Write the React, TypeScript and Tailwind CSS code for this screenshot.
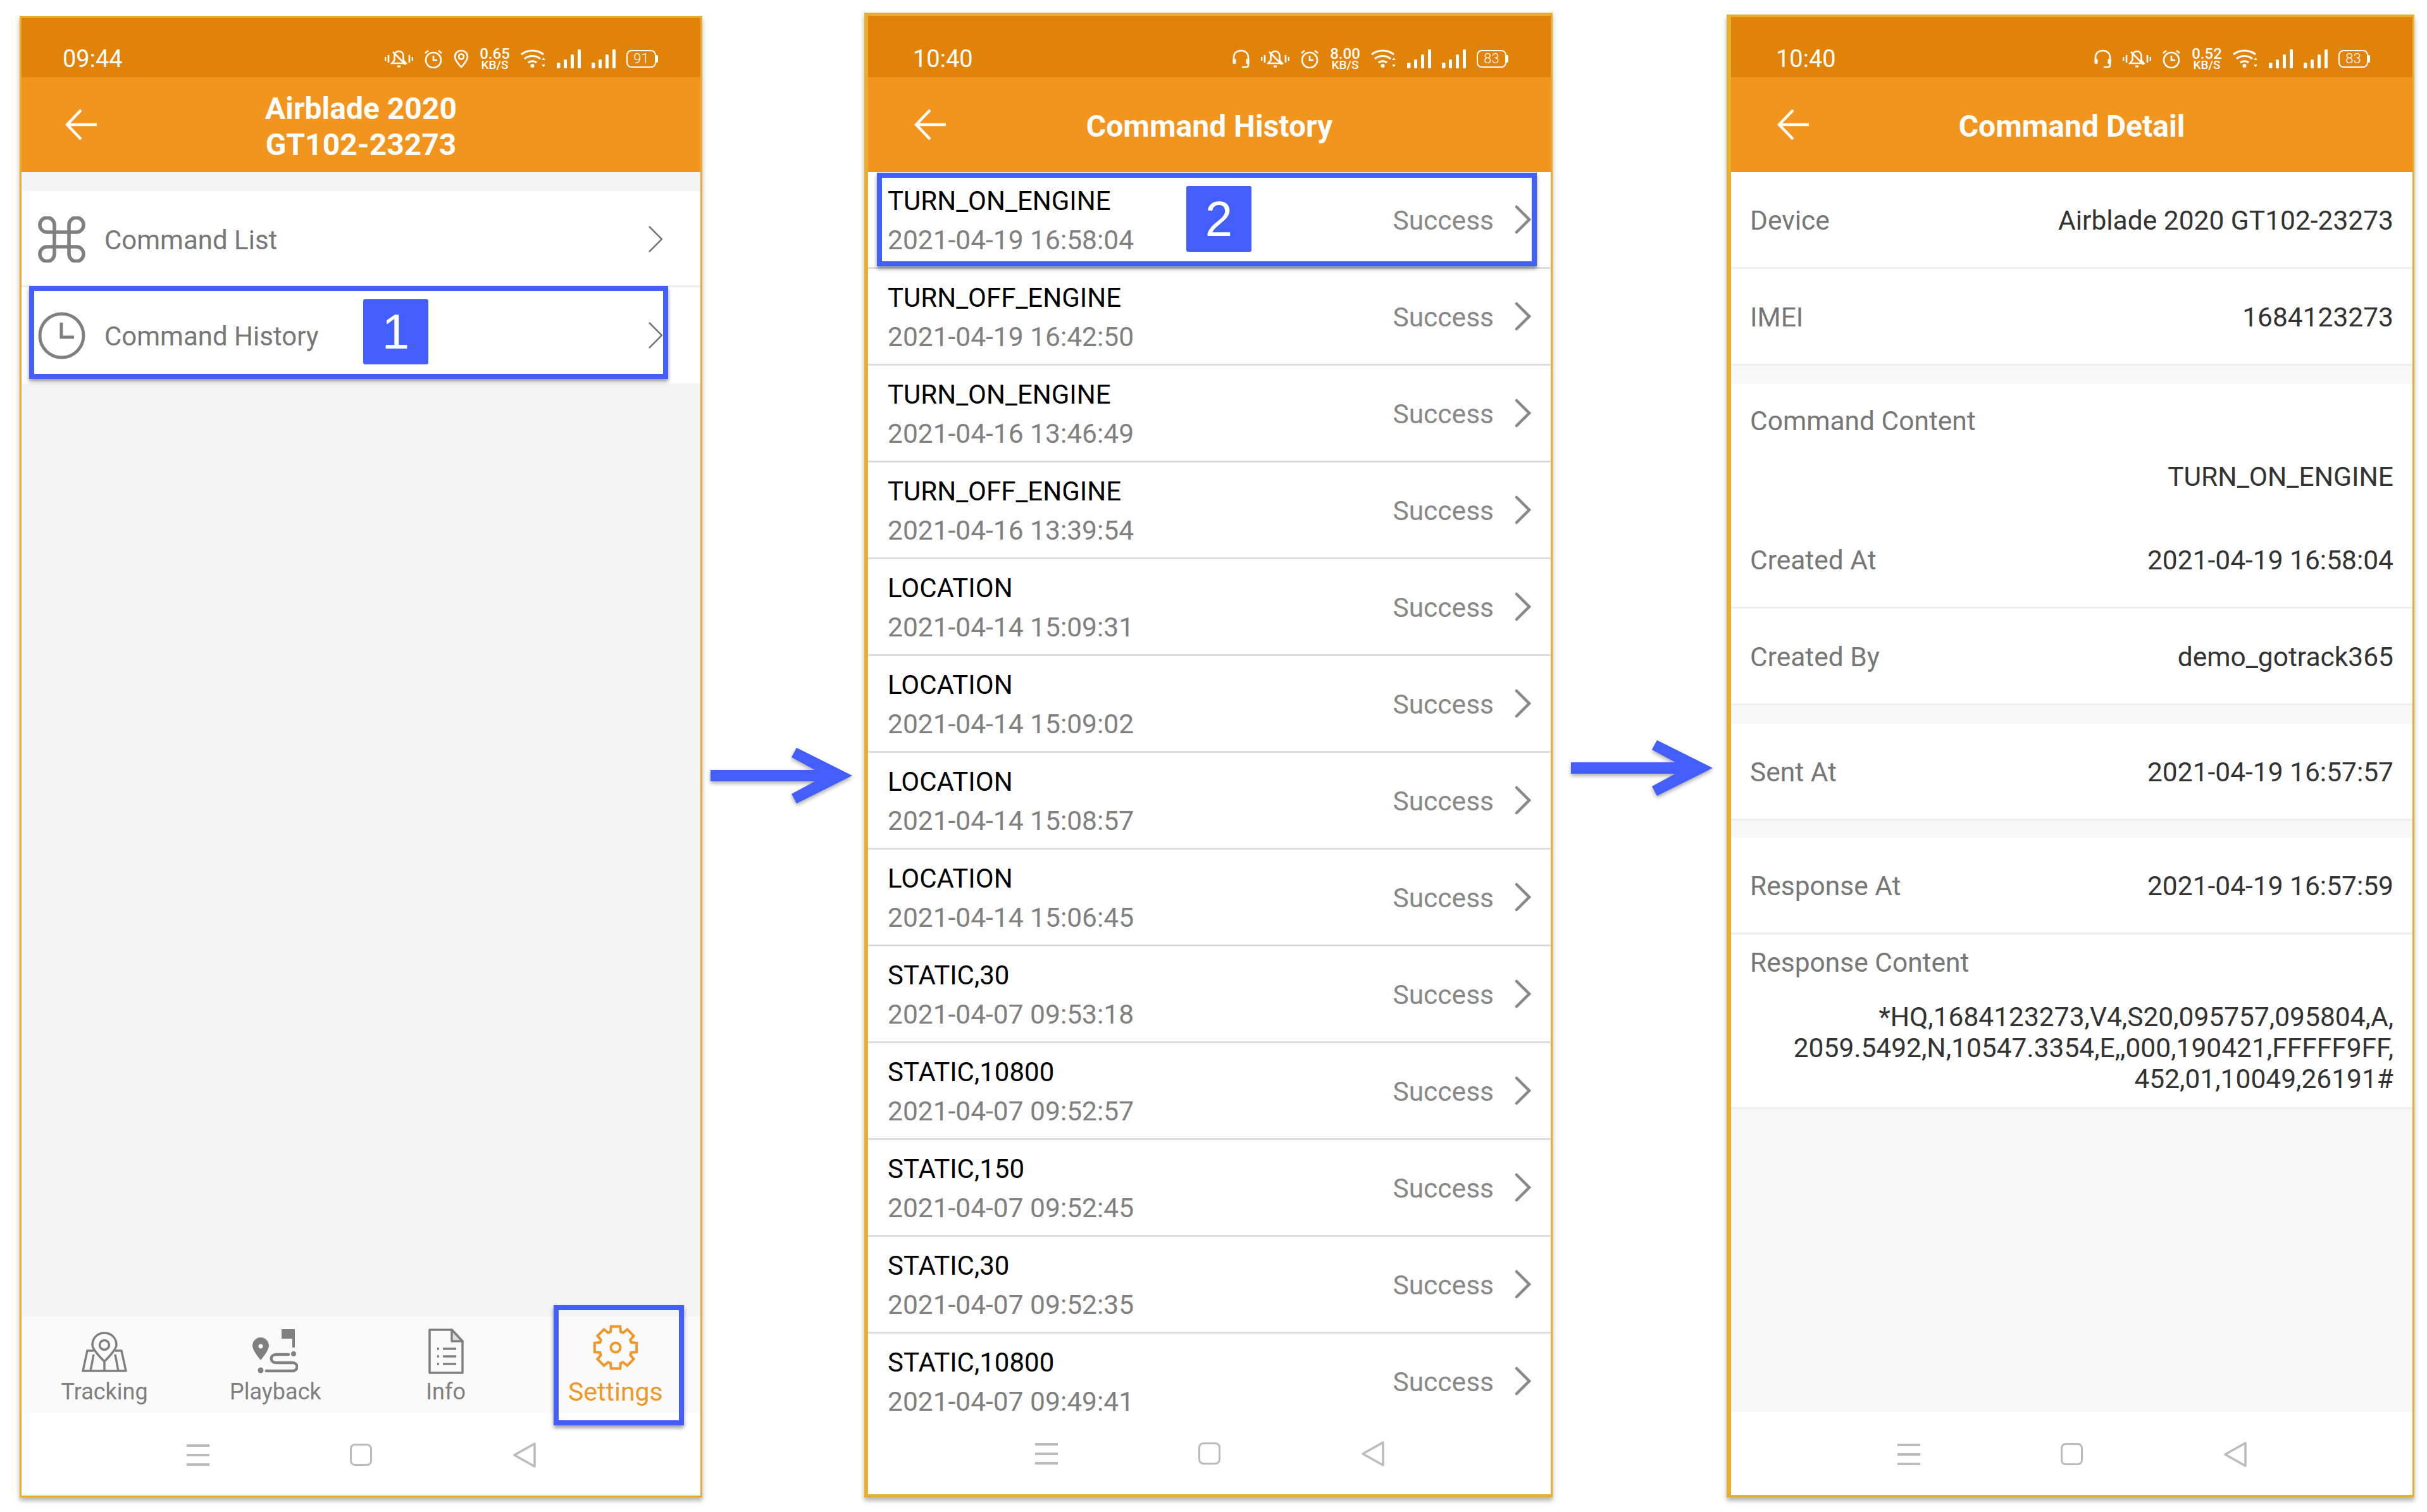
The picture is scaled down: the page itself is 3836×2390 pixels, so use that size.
import React from 'react';

// generates the outline of the settings cog
function gearPath(cx: number, cy: number, ro: number, ri: number, teeth: number) {
    const pts: string[] = [];
    const step = (Math.PI * 2) / teeth;
    for (let i = 0; i < teeth; i++) {
        const a = i * step - Math.PI / 2;
        const offs: [number, number][] = [
            [-0.4, ri],
            [-0.27, ro],
            [0.27, ro],
            [0.4, ri],
        ];
        offs.forEach(([o, r]) => {
            const t = a + o * step;
            pts.push(`${(cx + r * Math.cos(t)).toFixed(1)} ${(cy + r * Math.sin(t)).toFixed(1)}`);
        });
    }
    return 'M' + pts.join('L') + 'Z';
}

const BellOff = () => (
    <svg viewBox="0 0 45 30" className="w-[45px] h-[30px]" fill="none" stroke="#fff" strokeWidth="2.6">
        <path d="M1 12v6M6 9v12M39 9v12M44 12v6" />
        <path d="M22.5 3c-5 0-7 4-7 8v6l-4 5h22l-4-5v-6c0-4-2-8-7-8z" />
        <path d="M20 27h5" strokeWidth="3" />
        <path d="M13 4l20 20" />
    </svg>
);

const Alarm = () => (
    <svg viewBox="0 0 30 30" className="w-[30px] h-[30px]" fill="none" stroke="#fff" strokeWidth="2.6">
        <circle cx="15" cy="17" r="12" />
        <path d="M15 10v7h6M2 6l5-4M28 6l-5-4" />
    </svg>
);

const Pin = () => (
    <svg viewBox="0 0 24 30" className="w-[24px] h-[30px]" fill="none" stroke="#fff" strokeWidth="2.6">
        <path d="M12 28S2 18 2 11.5C2 6 6.500 2 12 2s10 4 10 9.500C22 18 12 28 12 28z" />
        <circle cx="12" cy="11.500" r="4" />
    </svg>
);

const Headset = () => (
    <svg viewBox="0 0 29 30" className="w-[29px] h-[30px]" fill="none" stroke="#fff" strokeWidth="2.6">
        <path d="M3 17v-4C3 6 8 2 14.500 2S26 6 26 13v12c0 2-1 3-3 3h-7" />
        <rect x="1.500" y="15" width="5" height="8" rx="1.500" fill="#fff" stroke="none" />
        <rect x="22.500" y="15" width="5" height="8" rx="1.500" fill="#fff" stroke="none" />
    </svg>
);

const Wifi = () => (
    <svg viewBox="0 0 40 30" className="w-[40px] h-[30px]" fill="none" stroke="#fff" strokeWidth="3.200">
        <path d="M1 8C11 0 26 0 36 8M6 15c7-6 18-6 25 0M12 21c3-3 10-3 13 0" />
        <circle cx="18.500" cy="26" r="3" fill="#fff" stroke="none" />
        <path d="M36 13l-3 4h6zM36 28l-3-4h6z" fill="#fff" stroke="none" />
    </svg>
);

const Signal = () => (
    <svg viewBox="0 0 38 30" className="w-[38px] h-[30px]" fill="#fff">
        <rect x="0" y="21" width="5.500" height="9" rx="1.500" />
        <rect x="11" y="16" width="5" height="14" rx="1.500" />
        <rect x="22" y="8" width="5" height="22" rx="1.500" />
        <rect x="33" y="0" width="5" height="30" rx="1.500" />
    </svg>
);

const Battery = ({ level }: { level: string }) => (
    <div className="flex items-center">
        <div className="w-[47px] h-[28px] rounded-[8px] border-[2.5px] border-white flex items-center justify-center text-white text-[22px] font-light leading-none">
            {level}
        </div>
        <div className="w-[3px] h-[12px] bg-white rounded-r-[2px]" />
    </div>
);

const BackArrow = () => (
    <svg viewBox="0 0 50 50" className="w-[50px] h-[50px]" fill="none" stroke="#fff" strokeWidth="4.500">
        <path d="M50 25H3M25 2L3 25l22 23" />
    </svg>
);

const StatusBar = ({ time, speed, battery, headset, pin, leftPad }: { time: string; speed: string; battery: string; headset?: boolean; pin?: boolean; leftPad: string }) => (
    <div className="flex flex-col justify-end bg-[#E08308] shrink-0 h-full">
        <div className={`flex items-center justify-between h-[58px] pr-[67px] ${leftPad}`}>
            <span className="text-white text-[38px] leading-none">{time}</span>
            <div className="flex items-center gap-[17px]">
                {headset && <Headset />}
                <BellOff />
                <Alarm />
                {pin && <Pin />}
                <div className="flex flex-col items-center text-white font-medium leading-none w-[48px]">
                    <span className="text-[24px] leading-[20px]">{speed}</span>
                    <span className="text-[19px] leading-[16px]">KB/S</span>
                </div>
                <Wifi />
                <Signal />
                <Signal />
                <Battery level={battery} />
            </div>
        </div>
    </div>
);

const Header = ({ lines, arrowLeft }: { lines: string[]; arrowLeft: string }) => (
    <div className="relative flex items-center justify-center h-[150px] bg-[#F2951F] shrink-0">
        <div className={`absolute top-[50px] ${arrowLeft}`}>
            <BackArrow />
        </div>
        <div className="text-white text-[48px] font-bold leading-[57px] text-center pt-[5px]">
            {lines.map((l) => (
                <div key={l}>{l}</div>
            ))}
        </div>
    </div>
);

const NavBar = () => (
    <div className="grid grid-cols-[258px_258px_258px] justify-center items-center h-[131px] bg-white shrink-0 justify-items-center pt-[2px]">
        <div className="w-[36px] h-[34px] flex flex-col justify-between">
            <div className="h-[4px] bg-[#BBBBBB]" />
            <div className="h-[4px] bg-[#BBBBBB]" />
            <div className="h-[4px] bg-[#BBBBBB]" />
        </div>
        <div className="w-[35px] h-[35px] rounded-[8px] border-[3px] border-[#BBBBBB]" />
        <svg viewBox="0 0 36 40" className="w-[36px] h-[40px]" fill="none" stroke="#BBBBBB" strokeWidth="3.500" strokeLinejoin="round">
            <path d="M34 2v36L2 20z" />
        </svg>
    </div>
);

const Chevron = () => (
    <svg viewBox="0 0 26 46" className="w-[26px] h-[46px] shrink-0" fill="none" stroke="#888888" strokeWidth="4.500" strokeLinecap="round">
        <path d="M3 3l20 20-20 20" />
    </svg>
);

const ThinChevron = () => (
    <svg viewBox="0 0 22 42" className="w-[22px] h-[42px] shrink-0" fill="none" stroke="#777777" strokeWidth="2.500">
        <path d="M1 1l20 20L1 41" />
    </svg>
);

const CommandIcon = () => (
    <svg viewBox="2.500 2.500 19 19" className="w-[75px] h-[73px] shrink-0" fill="none" stroke="#808080" strokeWidth="1.450">
        <path d="M15 6v12a3 3 0 1 0 3-3H6a3 3 0 1 0 3 3V6a3 3 0 1 0-3 3h12a3 3 0 1 0-3-3" />
    </svg>
);

const ClockIcon = () => (
    <svg viewBox="0 0 75 75" className="w-[75px] h-[75px] shrink-0" fill="none" stroke="#808080" strokeWidth="5">
        <circle cx="37.500" cy="37.500" r="34.500" />
        <path d="M37 17v23h20" />
    </svg>
);

const TrackingIcon = () => (
    <svg viewBox="0 0 72 64" className="w-[72px] h-[64px]" fill="none" stroke="#808080" strokeWidth="3.500" strokeLinejoin="round">
        <path d="M36 2C25 2 17 10 17 21c0 8 19 26 19 26s19-18 19-26C55 10 47 2 36 2z" />
        <circle cx="36" cy="21" r="7.500" />
        <path d="M19 30H9L2 62h68l-7-32H53M19 36l-5 26M53 36l5 26M36 47v15" />
    </svg>
);

const PlaybackIcon = () => (
    <svg viewBox="0 0 72 70" className="w-[72px] h-[70px]" fill="none" stroke="#808080" strokeWidth="4.500" strokeLinecap="round">
        <path d="M46 0h21v15H46z" fill="#808080" stroke="none" />
        <path d="M63 15h4v14h-4z" fill="#808080" stroke="none" />
        <path d="M13 13C6 13 0 19 0 26c0 8 13 23 13 23s13-15 13-23c0-7-6-13-13-13z" fill="#808080" stroke="none" />
        <circle cx="13" cy="27" r="3.500" fill="#FAFAFA" stroke="none" />
        <path d="M57 40H38c-11 0-11 13 0 13h25c10 0 10 13 0 13H22" />
        <circle cx="65" cy="39" r="4" fill="#808080" stroke="none" />
        <circle cx="13" cy="65" r="4.500" fill="#808080" stroke="none" />
    </svg>
);

const InfoIcon = () => (
    <svg viewBox="0 0 56 72" className="w-[56px] h-[72px]" fill="none" stroke="#808080" strokeWidth="3.500" strokeLinejoin="round">
        <path d="M2 2h35l17 18v50H2z" />
        <path d="M37 2v18h17z" fill="#DDDDDD" />
        <path d="M14 32h3M23 32h21M14 44h3M23 44h21M14 56h3M23 56h21" strokeWidth="3.500" />
    </svg>
);

const GearIcon = () => (
    <svg viewBox="0 0 72 72" className="w-[72px] h-[72px]" fill="none" stroke="#EF982A" strokeWidth="4">
        <path d={gearPath(36, 36, 34, 26, 8)} />
        <circle cx="36" cy="36" r="7.500" />
    </svg>
);

const TabBar = () => (
    <div className="grid grid-cols-4 h-[152px] bg-[#FAFAFA] shrink-0">
        <div className="flex flex-col items-center pr-[6px]">
            <div className="h-[94px] pt-[24px]"><TrackingIcon /></div>
            <span className="text-[36px] leading-[50px] text-[#808080]">Tracking</span>
        </div>
        <div className="flex flex-col items-center pr-[2px]">
            <div className="h-[94px] pt-[20px]"><PlaybackIcon /></div>
            <span className="text-[36px] leading-[50px] text-[#808080]">Playback</span>
        </div>
        <div className="flex flex-col items-center">
            <div className="h-[94px] pt-[19px]"><InfoIcon /></div>
            <span className="text-[36px] leading-[50px] text-[#808080]">Info</span>
        </div>
        <div className="flex flex-col items-center">
            <div className="h-[94px] pt-[13px]"><GearIcon /></div>
            <span className="text-[41px] leading-[50px] text-[#EF982A]">Settings</span>
        </div>
    </div>
);

const history = [
    ['TURN_ON_ENGINE', '2021-04-19 16:58:04'],
    ['TURN_OFF_ENGINE', '2021-04-19 16:42:50'],
    ['TURN_ON_ENGINE', '2021-04-16 13:46:49'],
    ['TURN_OFF_ENGINE', '2021-04-16 13:39:54'],
    ['LOCATION', '2021-04-14 15:09:31'],
    ['LOCATION', '2021-04-14 15:09:02'],
    ['LOCATION', '2021-04-14 15:08:57'],
    ['LOCATION', '2021-04-14 15:06:45'],
    ['STATIC,30', '2021-04-07 09:53:18'],
    ['STATIC,10800', '2021-04-07 09:52:57'],
    ['STATIC,150', '2021-04-07 09:52:45'],
    ['STATIC,30', '2021-04-07 09:52:35'],
    ['STATIC,10800', '2021-04-07 09:49:41'],
];

const DetailRow = ({ label, value }: { label: string; value: string }) => (
    <div className="flex items-center justify-between h-[153px] px-[30px] pt-[4px] bg-white border-b-[3px] border-[#EEEEEE] text-[42.5px]">
        <span className="text-[#777777]">{label}</span>
        <span className="text-[#333333]">{value}</span>
    </div>
);

const Arrow = ({ className }: { className: string }) => (
    <div className={`shrink-0 flex ${className}`}>
        <svg viewBox="0 0 224 88" className="w-[224px] h-[88px] drop-shadow-[0_3px_3px_rgba(0,0,0,0.35)]" fill="#445EF9">
            <path d="M0 35h165L128 15l8-15 88 44-88 44-8-15 37-20H0z" />
        </svg>
    </div>
);

export default function App() {
    return (
        <div className="flex items-start w-[3836px] h-[2390px] pl-[31px] bg-white overflow-hidden font-['Roboto',sans-serif]">
            {/* first screen */}
            <div className="relative flex flex-col w-[1079px] h-[2342px] mt-[25px] border-[3px] border-[#E8AE30] bg-[#F4F4F4] shadow-[0_5px_7px_rgba(0,0,0,0.3)] shrink-0">
                <div className="h-[94px] shrink-0 shadow-[inset_0_6px_5px_-3px_rgba(0,0,0,0.3)]">
                    <StatusBar time="09:44" speed="0.65" battery="91" pin leftPad="pl-[65px]" />
                </div>
                <Header lines={['Airblade 2020', 'GT102-23273']} arrowLeft="left-[69px]" />
                <div className="flex-1 flex flex-col pt-[30px]">
                    <div className="flex items-center h-[152px] pl-[26px] pr-[60px] pt-[3px] bg-white border-b-[3px] border-[#EEEEEE] gap-[30px]">
                        <CommandIcon />
                        <span className="flex-1 text-[42px] text-[#777777] pt-[3px]">Command List</span>
                        <ThinChevron />
                    </div>
                    <div className="flex items-center h-[152px] pl-[26px] pr-[60px] bg-white gap-[30px]">
                        <ClockIcon />
                        <span className="flex-1 text-[42px] text-[#777777] pt-[3px]">Command History</span>
                        <ThinChevron />
                    </div>
                </div>
                <TabBar />
                <NavBar />

                <div className="absolute left-[12px] top-[424px] w-[1010px] h-[147px] border-[8px] border-[#445EF9] shadow-[0_4px_6px_rgba(0,0,0,0.4)]" />
                <div className="absolute left-[540px] top-[445px] w-[103px] h-[103px] rounded-[3px] bg-[#445EF9] flex items-center justify-center text-white text-[78px] font-['Liberation_Sans',sans-serif]">
                    1
                </div>
                <div className="absolute left-[841px] top-[2035px] w-[206px] h-[190px] border-[8px] border-[#445EF9] shadow-[0_4px_6px_rgba(0,0,0,0.4)]" />
            </div>

            <Arrow className="w-[256px] pl-[13px] mt-[1182px]" />

            {/* second screen */}
            <div className="relative flex flex-col w-[1088px] h-[2347px] mt-[20px] border-y-[5px] border-l-[6px] border-r-[3px] border-[#E8AE30] bg-white shadow-[0_5px_7px_rgba(0,0,0,0.3)] shrink-0">
                <div className="h-[97px] shrink-0 shadow-[inset_0_6px_5px_-3px_rgba(0,0,0,0.3)]">
                    <StatusBar time="10:40" speed="8.00" battery="83" headset leftPad="pl-[71px]" />
                </div>
                <Header lines={['Command History']} arrowLeft="left-[73px]" />
                <div className="flex-1 min-h-0">
                    {history.map(([name, date], i) => (
                        <div key={i} className="flex items-center h-[153px] pl-[31px] pr-[31px] border-b-[3px] border-[#DDDDDD]">
                            <div className="flex-1 text-[42.5px] leading-[62px] pt-[4px]">
                                <div className="text-black text-[42px]">{name}</div>
                                <div className="text-[#808080]">{date}</div>
                            </div>
                            <span className="text-[42.5px] text-[#888888] mr-[33px] pt-[3px]">Success</span>
                            <Chevron />
                        </div>
                    ))}
                </div>
                <NavBar />

                <div className="absolute left-[14px] top-[248px] w-[1043px] h-[148px] border-[8px] border-[#445EF9] shadow-[0_4px_6px_rgba(0,0,0,0.4)]" />
                <div className="absolute left-[503px] top-[269px] w-[103px] h-[104px] rounded-[3px] bg-[#445EF9] flex items-center justify-center text-white text-[78px] font-['Liberation_Sans',sans-serif]">
                    2
                </div>
            </div>

            <Arrow className="w-[275px] pl-[29px] mt-[1170px]" />

            {/* third screen */}
            <div className="relative flex flex-col w-[1087px] h-[2344px] mt-[23px] border-y-[4px] border-l-[7px] border-r-[3px] border-[#E8AE30] bg-[#F8F8F8] shadow-[0_5px_7px_rgba(0,0,0,0.3)] shrink-0">
                <div className="h-[95px] shrink-0 shadow-[inset_0_6px_5px_-3px_rgba(0,0,0,0.3)]">
                    <StatusBar time="10:40" speed="0.52" battery="83" headset leftPad="pl-[71px]" />
                </div>
                <Header lines={['Command Detail']} arrowLeft="left-[73px]" />
                <div className="flex-1 min-h-0">
                    <DetailRow label="Device" value="Airblade 2020 GT102-23273" />
                    <DetailRow label="IMEI" value="1684123273" />
                    <div className="mt-[29px] bg-white px-[30px] pt-[29px] h-[202px] text-[42.5px]">
                        <div className="text-[#777777] leading-[60px]">Command Content</div>
                        <div className="text-[#333333] text-right leading-[60px] mt-[28px]">TURN_ON_ENGINE</div>
                    </div>
                    <DetailRow label="Created At" value="2021-04-19 16:58:04" />
                    <DetailRow label="Created By" value="demo_gotrack365" />
                    <div className="mt-[29px]">
                        <DetailRow label="Sent At" value="2021-04-19 16:57:57" />
                    </div>
                    <div className="mt-[27px]">
                        <DetailRow label="Response At" value="2021-04-19 16:57:59" />
                    </div>
                    <div className="bg-white px-[30px] h-[276px] border-b-[3px] border-[#EEEEEE] text-[42.5px]">
                        <div className="text-[#777777] leading-[48px] pt-[21px]">Response Content</div>
                        <div className="text-[#333333] text-right leading-[49px] mt-[37px]">
                            *HQ,1684123273,V4,S20,095757,095804,A,
                            <br />
                            2059.5492,N,10547.3354,E,,000,190421,FFFFF9FF,
                            <br />
                            452,01,10049,26191#
                        </div>
                    </div>
                </div>
                <NavBar />
            </div>
        </div>
    );
}
